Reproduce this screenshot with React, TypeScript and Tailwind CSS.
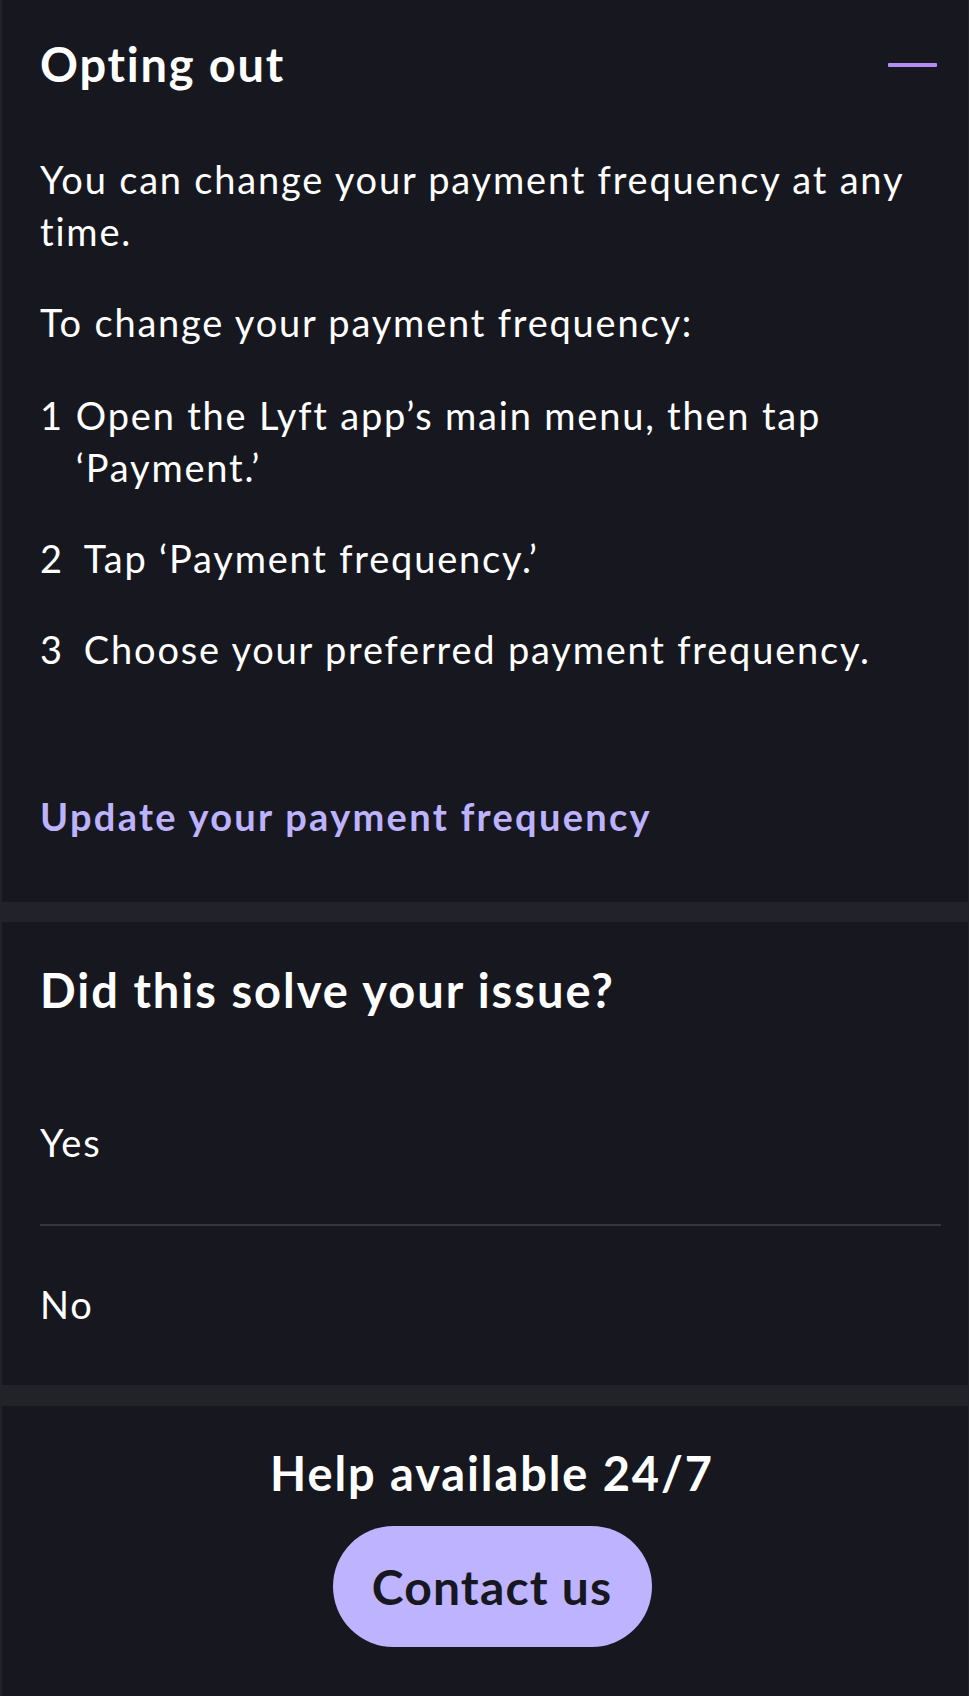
import React from 'react'

const font = { fontFamily: 'Lato, "Open Sans", sans-serif' }

const steps = [
  { n: '1', gap: 'gap-[12px]', text: 'Open the Lyft app’s main menu, then tap ‘Payment.’' },
  { n: '2', gap: 'gap-[20px]', text: 'Tap ‘Payment frequency.’' },
  { n: '3', gap: 'gap-[20px]', text: 'Choose your preferred payment frequency.' },
]

export default function App() {
  return (
    <div
      className="min-h-screen bg-[#17181f] text-white border-l-2 border-r border-[#22232a]"
      style={font}
    >
      {/* Article */}
      <section className="pl-[38px] pr-[31px] pt-[36px] pb-[60px]">
        <div className="flex items-center justify-between">
          <h2 className="text-[47px] leading-[56px] font-bold tracking-[1.8px]">Opting out</h2>
          <button aria-label="Collapse" className="w-[49px] h-[4px] rounded-[1px] bg-[#b48cf6] mt-[2px]" />
        </div>

        <p className="mt-[61px] text-[38px] leading-[52px] tracking-[1.8px] pr-[20px]">
          You can change your payment frequency at any time.
        </p>
        <p className="mt-[39px] text-[38px] leading-[52px] tracking-[1.8px]">To change your payment frequency:</p>

        <ol className="mt-[41px] flex flex-col gap-[39px]">
          {steps.map((s) => (
            <li key={s.n} className={`flex ${s.gap} text-[38px] leading-[52px] tracking-[1.8px]`}>
              <span className="shrink-0">{s.n}</span>
              <span className="pr-[60px]">{s.text}</span>
            </li>
          ))}
        </ol>

        <a href="#" className="block mt-[115px] text-[38px] leading-[52px] font-bold tracking-[2.3px] text-[#bdb2fd]">
          Update your payment frequency
        </a>
      </section>

      <div className="h-[20px] bg-[#222328]" />

      {/* Feedback */}
      <section className="pl-[38px] pr-[27px] pt-[40px] pb-[55px]">
        <h2 className="text-[47px] leading-[56px] font-bold tracking-[2px]">Did this solve your issue?</h2>
        <button className="block mt-[98px] text-[38px] leading-[52px] tracking-[1.8px]">Yes</button>
        <div className="mt-[56px] h-[2px] bg-[#35363c]" />
        <button className="block mt-[52px] text-[38px] leading-[52px] tracking-[1.8px]">No</button>
      </section>

      <div className="h-[21px] bg-[#222328]" />

      {/* Contact */}
      <section className="flex flex-col items-center pl-[14px] pt-[39px] pb-[50px]">
        <h2 className="text-[47px] leading-[56px] font-bold tracking-[1.9px]">Help available 24/7</h2>
        <button className="mt-[25px] w-[319px] h-[121px] rounded-full bg-[#bdb3ff] text-[#17181f] text-[48px] font-bold tracking-[1.2px]">
          Contact us
        </button>
      </section>
    </div>
  )
}
